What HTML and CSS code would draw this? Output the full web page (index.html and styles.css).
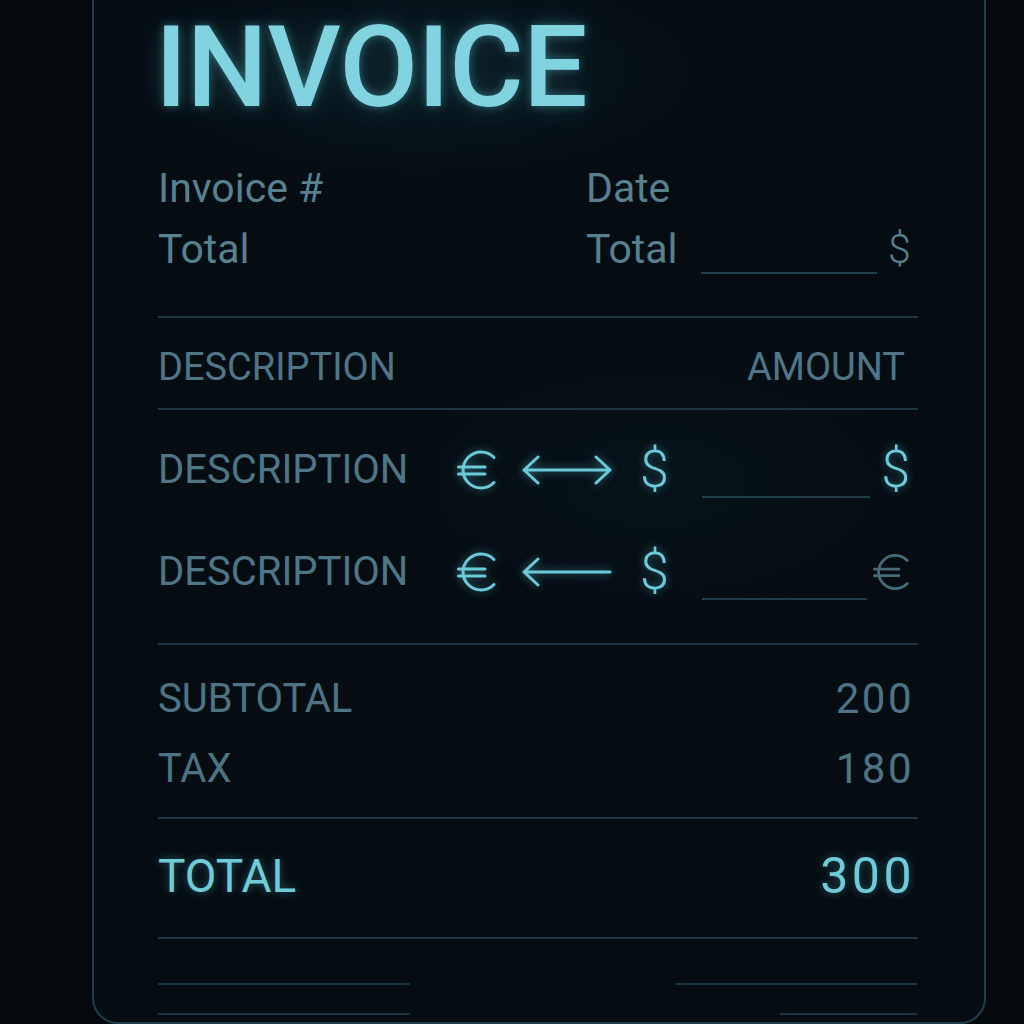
FILE: index.html
```html
<!DOCTYPE html>
<html lang="en">
<head>
<meta charset="utf-8">
<title>Invoice</title>
<link rel="stylesheet" href="styles.css">
</head>
<body>
<div class="card">
  <h1 class="title">INVOICE</h1>

  <div class="meta-row first">
    <span class="label">Invoice #</span>
    <span class="label">Date</span>
  </div>
  <div class="meta-row second">
    <span class="label">Total</span>
    <span class="label">Total</span>
    <span class="blank"></span>
    <span class="label cur">$</span>
  </div>

  <div class="rule r1"></div>

  <div class="thead">
    <span>DESCRIPTION</span>
    <span>AMOUNT</span>
  </div>

  <div class="rule r2"></div>

  <div class="item i1">
    <span class="desc">DESCRIPTION</span>
    <svg class="euro" viewBox="0 0 40 42" width="40" height="42" aria-label="€"><path d="M37 8.5 A18 18 0 1 0 37 33.5 M1.5 18 H28 M1.5 25 H28"/></svg>
    <svg class="arrow" viewBox="0 0 92 30" width="92" height="30"><path d="M3 15 H89 M17 2 L3 15 L17 28 M75 2 L89 15 L75 28"/></svg>
    <span class="sym dollar">$</span>
    <span class="blank"></span>
    <span class="sym end">$</span>
  </div>
  <div class="item i2">
    <span class="desc">DESCRIPTION</span>
    <svg class="euro" viewBox="0 0 40 42" width="40" height="42" aria-label="€"><path d="M37 8.5 A18 18 0 1 0 37 33.5 M1.5 18 H28 M1.5 25 H28"/></svg>
    <svg class="arrow" viewBox="0 0 92 30" width="92" height="30"><path d="M3 15 H89 M17 2 L3 15 L17 28"/></svg>
    <span class="sym dollar">$</span>
    <span class="blank"></span>
    <svg class="euro end dim" viewBox="0 0 40 42" width="37" height="40" aria-label="€"><path d="M37 8.5 A18 18 0 1 0 37 33.5 M1.5 18 H28 M1.5 25 H28"/></svg>
  </div>

  <div class="rule r3"></div>

  <div class="sum s1"><span>SUBTOTAL</span><span class="num">200</span></div>
  <div class="sum s2"><span>TAX</span><span class="num">180</span></div>

  <div class="rule r4"></div>

  <div class="grand"><span>TOTAL</span><span class="num">300</span></div>

  <div class="rule r5"></div>

  <div class="sig sig1"><span class="sl"></span><span class="sr w1"></span></div>
  <div class="sig sig2"><span class="sl"></span><span class="sr w2"></span></div>
</div>
</body>
</html>
```

FILE: styles.css
```css
* { box-sizing: border-box; }

html, body {
  margin: 0;
  padding: 0;
  background: #04090d;
  height: 1024px;
  overflow: hidden;
  font-family: Roboto, "Noto Sans", sans-serif;
}

.card {
  width: 894px;
  margin: -40px 0 0 92px;
  padding: 48px 66px 7px 64px;
  border: 2px solid #1f3d4b;
  border-radius: 26px;
  background:
    radial-gradient(ellipse 420px 160px at 330px 110px, rgba(40, 110, 130, 0.12), transparent 70%),
    radial-gradient(ellipse 400px 200px at 560px 520px, rgba(30, 90, 110, 0.07), transparent 70%),
    #050d13;
}

.title {
  margin: 0 0 0 -3px;
  height: 115px;
  line-height: 115px;
  font-size: 114px;
  font-weight: 500;
  color: #80d3df;
  letter-spacing: -0.5px;
  text-shadow: 0 0 10px rgba(90, 200, 220, 0.45), 0 0 30px rgba(90, 200, 220, 0.2);
}

.label {
  color: #58808f;
  font-size: 41px;
  line-height: 48px;
}

.meta-row {
  display: grid;
  grid-template-columns: 428px 115px 176px auto;
  height: 48px;
}
.meta-row.first { margin-top: 39px; }
.meta-row.second { margin-top: 12px; height: 50px; }
.meta-row.second .label { line-height: 50px; }
.meta-row .blank {
  align-self: end;
  height: 2px;
  background: #21404d;
}
.meta-row .cur {
  padding-left: 11px;
  font-weight: 300;
}

.rule {
  height: 2px;
  background: #1c3744;
}
.r1 { margin-top: 42px; }
.r2 { margin-top: 16px; }
.r3 { margin-top: 41px; }
.r4 { margin-top: 23px; }
.r5 { margin-top: 33px; }

.thead {
  display: flex;
  justify-content: space-between;
  margin-top: 24px;
  height: 50px;
  line-height: 50px;
  font-size: 38px;
  color: #4f7587;
  padding-right: 13px;
}

.item {
  display: grid;
  grid-template-columns: 300px 63px 119px 62px 168px 1fr;
  align-items: center;
  height: 60px;
}
.i1 { margin-top: 30px; }
.i2 { margin-top: 42px; }

.desc {
  font-size: 40px;
  line-height: 60px;
  color: #4f7587;
}

.euro {
  fill: none;
  stroke: #6ccbd8;
  stroke-width: 3;
  stroke-linecap: round;
  margin-left: -1px;
  filter: drop-shadow(0 0 4px rgba(90, 200, 220, 0.5));
}
.euro.end {
  justify-self: end;
  margin-right: 8px;
}
.euro.dim {
  stroke: #48697a;
  filter: none;
}

.sym {
  font-size: 52px;
  font-weight: 300;
  line-height: 60px;
  color: #6ccbd8;
  text-shadow: 0 0 8px rgba(90, 200, 220, 0.5);
}
.sym.end {
  justify-self: end;
  padding-right: 8px;
}

.arrow {
  fill: none;
  stroke: #6ccbd8;
  stroke-width: 3;
  stroke-linecap: round;
  stroke-linejoin: round;
  filter: drop-shadow(0 0 4px rgba(90, 200, 220, 0.55));
}

.item .blank {
  align-self: end;
  height: 2px;
  margin-bottom: 2px;
  background: #1e3c49;
}
.i2 .blank { margin-right: 3px; }

.sum {
  display: flex;
  justify-content: space-between;
  align-items: center;
  height: 50px;
  line-height: 50px;
  font-size: 40px;
  color: #4d7385;
  padding-right: 4px;
}
.sum .num {
  font-size: 42px;
  letter-spacing: 2.5px;
}
.s1 { margin-top: 29px; }
.s2 { margin-top: 20px; }

.grand {
  display: flex;
  justify-content: space-between;
  align-items: center;
  margin-top: 29px;
  height: 56px;
  line-height: 56px;
  font-size: 46px;
  font-weight: 400;
  color: #6fcbd8;
  padding-right: 3px;
  text-shadow: 0 0 8px rgba(90, 200, 220, 0.4);
}
.grand .num {
  font-size: 50px;
  letter-spacing: 3.5px;
}

.sig {
  display: flex;
  justify-content: space-between;
  height: 2px;
}
.sig1 { margin-top: 44px; }
.sig2 { margin-top: 28px; }
.sig span {
  display: block;
  height: 2px;
  background: #1a3542;
}
.sl { width: 252px; }
.sr.w1 { width: 241px; margin-right: 1px; }
.sr.w2 { width: 137px; margin-right: 1px; }
```
